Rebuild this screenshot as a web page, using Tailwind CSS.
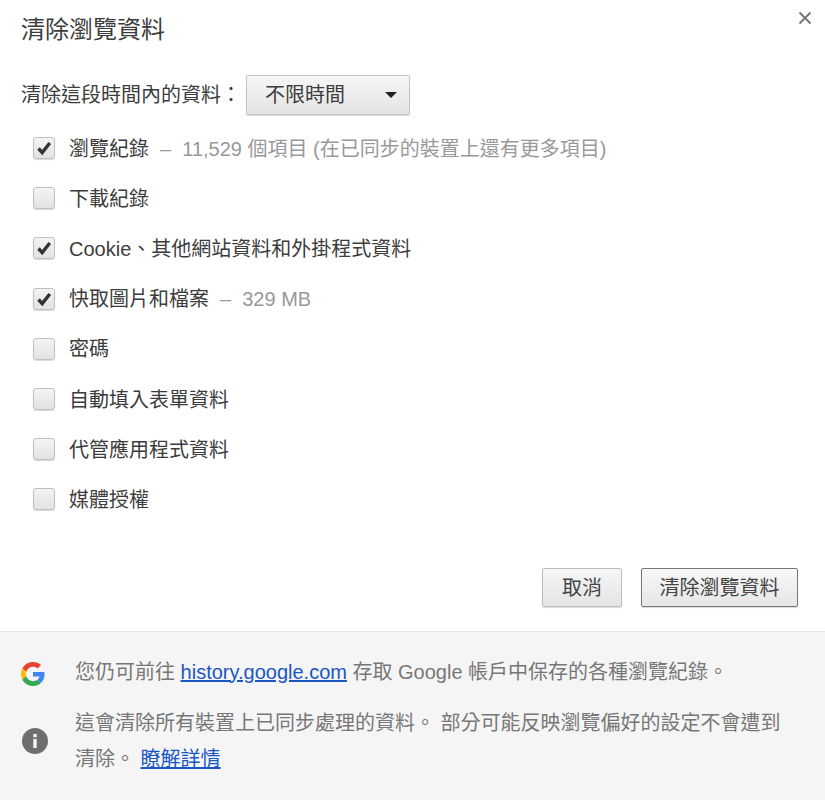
<!doctype html>
<html lang="zh-Hant">
<head>
<meta charset="utf-8">
<script src="https://cdn.jsdelivr.net/npm/@tailwindcss/browser@4"></script>
</head>
<body class="bg-white">
<div class="relative w-[825px] h-[800px] overflow-hidden bg-white text-[#3c3c3c] font-['Liberation_Sans','Noto_Sans_CJK_TC',sans-serif] text-[20px] leading-[26px]">
  <svg class="absolute top-[11px] right-[13px] w-[14px] h-[14px]" viewBox="0 0 14 14"><path d="M1.5 1.5 12.5 12.5M12.5 1.500 1.500 12.500" stroke="#777" stroke-width="2" fill="none"/></svg>
  <div class="h-[631px] pl-[21px] flex flex-col">
    <h1 class="mt-[15px] text-[24px] leading-[30px] font-normal text-[#3c3c3c]">清除瀏覽資料</h1>
    <div class="mt-[30px] flex items-center h-[40px]">
      <span class="w-[225px] whitespace-nowrap">清除這段時間內的資料：</span>
      <div class="w-[164px] h-[40px] flex items-center justify-between pl-[18px] pr-[12px] rounded-[2px] border border-[#c4c4c4] bg-gradient-to-b from-[#f6f6f6] to-[#e4e4e4] shadow-[0_1px_1px_rgba(0,0,0,0.15)]">
        <span>不限時間</span>
        <span class="w-0 h-0 border-x-[6px] border-x-transparent border-t-[6px] border-t-[#222]"></span>
      </div>
    </div>
    <ul class="mt-[8px] pl-[12px] flex flex-col">
      <li class="h-[50.2px] flex items-center gap-[14px]">
        <span class="w-[22px] h-[22px] rounded-[3px] border border-[#c0c0c0] bg-gradient-to-b from-[#f4f4f4] to-[#e2e2e2] shadow-[0_1px_1px_rgba(0,0,0,0.15)] flex items-center justify-center"><svg class="w-[16px] h-[16px]" viewBox="0 0 16 16"><path d="M2.5 8.5 6.2 12.6 13.8 3" stroke="#333" stroke-width="3.400" fill="none"/></svg></span>
        <span class="whitespace-nowrap pt-px">瀏覽紀錄<span class="text-[#999] ml-[11px]">–&nbsp; 11,529 個項目 (在已同步的裝置上還有更多項目)</span></span>
      </li>
      <li class="h-[50.2px] flex items-center gap-[14px]">
        <span class="w-[22px] h-[22px] rounded-[3px] border border-[#c0c0c0] bg-gradient-to-b from-[#f4f4f4] to-[#e2e2e2] shadow-[0_1px_1px_rgba(0,0,0,0.15)]"></span>
        <span class="pt-px">下載紀錄</span>
      </li>
      <li class="h-[50.2px] flex items-center gap-[14px]">
        <span class="w-[22px] h-[22px] rounded-[3px] border border-[#c0c0c0] bg-gradient-to-b from-[#f4f4f4] to-[#e2e2e2] shadow-[0_1px_1px_rgba(0,0,0,0.15)] flex items-center justify-center"><svg class="w-[16px] h-[16px]" viewBox="0 0 16 16"><path d="M2.5 8.5 6.2 12.6 13.8 3" stroke="#333" stroke-width="3.400" fill="none"/></svg></span>
        <span class="whitespace-nowrap pt-px">Cookie、其他網站資料和外掛程式資料</span>
      </li>
      <li class="h-[50.2px] flex items-center gap-[14px]">
        <span class="w-[22px] h-[22px] rounded-[3px] border border-[#c0c0c0] bg-gradient-to-b from-[#f4f4f4] to-[#e2e2e2] shadow-[0_1px_1px_rgba(0,0,0,0.15)] flex items-center justify-center"><svg class="w-[16px] h-[16px]" viewBox="0 0 16 16"><path d="M2.5 8.5 6.2 12.6 13.8 3" stroke="#333" stroke-width="3.400" fill="none"/></svg></span>
        <span class="whitespace-nowrap pt-px">快取圖片和檔案<span class="text-[#999] ml-[11px]">–&nbsp; 329 MB</span></span>
      </li>
      <li class="h-[50.2px] flex items-center gap-[14px]">
        <span class="w-[22px] h-[22px] rounded-[3px] border border-[#c0c0c0] bg-gradient-to-b from-[#f4f4f4] to-[#e2e2e2] shadow-[0_1px_1px_rgba(0,0,0,0.15)]"></span>
        <span class="pt-px">密碼</span>
      </li>
      <li class="h-[50.2px] flex items-center gap-[14px]">
        <span class="w-[22px] h-[22px] rounded-[3px] border border-[#c0c0c0] bg-gradient-to-b from-[#f4f4f4] to-[#e2e2e2] shadow-[0_1px_1px_rgba(0,0,0,0.15)]"></span>
        <span class="pt-px">自動填入表單資料</span>
      </li>
      <li class="h-[50.2px] flex items-center gap-[14px]">
        <span class="w-[22px] h-[22px] rounded-[3px] border border-[#c0c0c0] bg-gradient-to-b from-[#f4f4f4] to-[#e2e2e2] shadow-[0_1px_1px_rgba(0,0,0,0.15)]"></span>
        <span class="pt-px">代管應用程式資料</span>
      </li>
      <li class="h-[50.2px] flex items-center gap-[14px]">
        <span class="w-[22px] h-[22px] rounded-[3px] border border-[#c0c0c0] bg-gradient-to-b from-[#f4f4f4] to-[#e2e2e2] shadow-[0_1px_1px_rgba(0,0,0,0.15)]"></span>
        <span class="pt-px">媒體授權</span>
      </li>
    </ul>
    <div class="mt-auto mb-[24px] pr-[27px] flex justify-end gap-[19px]">
      <button class="w-[80px] h-[39px] rounded-[2px] border border-[#bdbdbd] bg-gradient-to-b from-[#f6f6f6] to-[#e4e4e4] shadow-[0_1px_1px_rgba(0,0,0,0.15)] text-[#444]">取消</button>
      <button class="w-[157px] h-[39px] rounded-[2px] border border-[#777] bg-gradient-to-b from-[#f8f8f8] to-[#e6e6e6] shadow-[0_1px_1px_rgba(0,0,0,0.15)] text-[#444]">清除瀏覽資料</button>
    </div>
  </div>
  <div class="h-[169px] bg-[#f5f5f5] border-t border-[#e4e4e4] text-[#777] pl-[21px] pr-[10px]">
    <div class="flex items-center gap-[30px] pt-[19px] h-[60px]">
      <svg class="w-[24px] h-[24px] shrink-0 mt-[5px]" viewBox="0 0 48 48"><path fill="#EA4335" d="M24 9.5c3.5 0 6.700 1.200 9.200 3.600l6.900-6.900C35.900 2.400 30.500 0 24 0 14.600 0 6.500 5.400 2.600 13.200l8 6.200C12.400 13.700 17.700 9.500 24 9.500z"/><path fill="#4285F4" d="M47 24.500c0-1.600-.1-3.100-.4-4.500H24v9h12.900c-.6 3-2.200 5.500-4.700 7.200l7.700 6c4.500-4.200 7.100-10.300 7.100-17.700z"/><path fill="#FBBC05" d="M10.500 28.600c-.5-1.500-.8-3-.8-4.600s.3-3.200.8-4.600l-8-6.200C.9 16.500 0 20.100 0 24s.9 7.500 2.600 10.800l7.900-6.200z"/><path fill="#34A853" d="M24 48c6.500 0 11.900-2.100 15.900-5.800l-7.700-6c-2.200 1.400-4.900 2.300-8.200 2.300-6.300 0-11.600-4.200-13.500-9.900l-7.900 6.200C6.500 42.600 14.600 48 24 48z"/></svg>
      <p class="whitespace-nowrap">您仍可前往 <a class="text-[#1a56c4] underline">history.google.com</a> 存取 Google 帳戶中保存的各種瀏覽紀錄。</p>
    </div>
    <div class="flex items-center gap-[27px] mt-[13px]">
      <svg class="w-[26px] h-[26px] shrink-0 ml-[1px]" viewBox="0 0 26 26"><circle cx="13" cy="13" r="13" fill="#6e6e6e"/><rect x="11.300" y="11" width="3.400" height="9" fill="#f5f5f5"/><rect x="11.300" y="6" width="3.400" height="3.300" fill="#f5f5f5"/></svg>
      <p class="leading-[36px]">這會清除所有裝置上已同步處理的資料。 部分可能反映瀏覽偏好的設定不會遭到<br>清除。 <a class="text-[#1a56c4] underline">瞭解詳情</a></p>
    </div>
  </div>
</div>
</body>
</html>
